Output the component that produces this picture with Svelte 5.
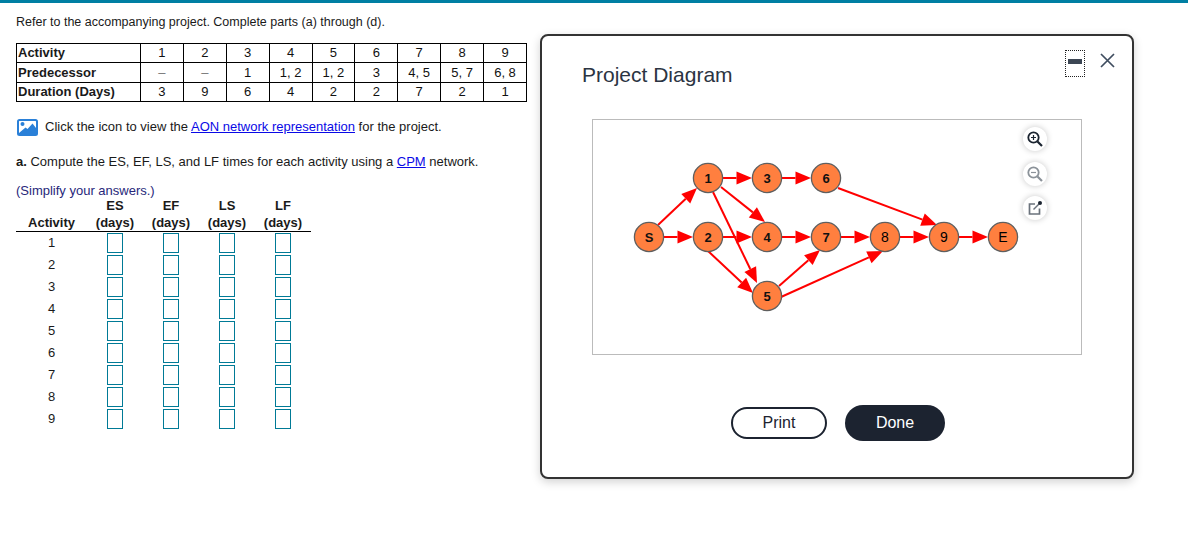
<script>
    const cols = [
        ['1', '–', '3'], ['2', '–', '9'], ['3', '1', '6'], ['4', '1, 2', '4'], ['5', '1, 2', '2'],
        ['6', '3', '2'], ['7', '4, 5', '7'], ['8', '5, 7', '2'], ['9', '6, 8', '1']
    ];
    const rowLabels = ['Activity', 'Predecessor', 'Duration (Days)'];
    const activities = ['1', '2', '3', '4', '5', '6', '7', '8', '9'];
    const heads = ['ES', 'EF', 'LS', 'LF'];

    // the svg viewBox uses page coordinates, so these read straight off the screenshot
    const nodes = [
        ['S', 649, 237], ['1', 708, 178], ['3', 767, 178], ['6', 826, 178], ['2', 708, 237], ['4', 767, 237],
        ['7', 826, 237], ['8', 885, 237], ['9', 944, 237], ['E', 1003, 237], ['5', 767, 296]
    ];
    const edges = [
        [658, 225, 697, 188], [664, 237, 693, 237], [723, 178, 752, 178], [782, 178, 811, 178],
        [721, 187, 765, 222], [713, 192, 757, 283], [723, 237, 752, 237], [708, 251, 753, 293],
        [782, 237, 811, 237], [779, 286, 820, 250], [781, 297, 883, 251], [841, 237, 870, 237],
        [838, 188, 937, 225], [900, 237, 929, 237], [959, 237, 988, 237]
    ];
    const R = 14.6;

    function arrow([x1, y1, tipX, tipY]) {
        const len = Math.hypot(tipX - x1, tipY - y1);
        const ux = (tipX - x1) / len;
        const uy = (tipY - y1) / len;
        const baseX = tipX - ux * 15.5;
        const baseY = tipY - uy * 15.5;
        const head = [
            [tipX, tipY],
            [baseX - uy * 6.5, baseY + ux * 6.5],
            [baseX + uy * 6.5, baseY - ux * 6.5]
        ].map((p) => p.join(',')).join(' ');
        return { x1, y1, x2: baseX, y2: baseY, head };
    }
    const arrows = edges.map(arrow);
</script>

<div class="page">
    <div class="topbar"></div>
    <main class="question">
        <p class="intro">Refer to the accompanying project. Complete parts (a) through (d).</p>

        <table class="data">
            <tbody>
                {#each rowLabels as label, r}
                    <tr>
                        <th>{label}</th>
                        {#each cols as col}
                            <td class:dash={col[r] === '–'}>{col[r]}</td>
                        {/each}
                    </tr>
                {/each}
            </tbody>
        </table>

        <p class="icon-line">
            <svg class="pic" width="21" height="17" viewBox="0 0 21 17">
                <rect x="1" y="1" width="19" height="15" rx="1.5" fill="#fff" stroke="#2a80d8" stroke-width="2" />
                <path d="M2 15 V14 L8.5 8.5 L10.5 10 L15.5 4.5 L19 9 V15 Z" fill="#2a80d8" />
                <circle cx="5.5" cy="5" r="2" fill="#2a80d8" />
            </svg>
            <span>Click the icon to view the <a href="#aon">AON network representation</a> for the project.</span>
        </p>

        <p class="part"><b>a.</b> Compute the ES, EF, LS, and LF times for each activity using a <a href="#cpm">CPM</a> network.</p>

        <p class="simplify">(Simplify your answers.)</p>

        <table class="answers">
            <thead>
                <tr>
                    <th class="act">Activity</th>
                    {#each heads as h}
                        <th>{h}<br />(days)</th>
                    {/each}
                </tr>
            </thead>
            <tbody>
                {#each activities as a}
                    <tr>
                        <td class="num">{a}</td>
                        {#each heads as h}
                            <td><input type="text" aria-label={`${h} activity ${a}`} /></td>
                        {/each}
                    </tr>
                {/each}
            </tbody>
        </table>
    </main>

    <section class="dialog">
        <button class="min" aria-label="Minimize"><span></span></button>
        <button class="close" aria-label="Close">
            <svg width="15" height="15" viewBox="0 0 15 15">
                <path d="M1 1 L14 14 M14 1 L1 14" stroke="#3f4d5f" stroke-width="1.7" fill="none" />
            </svg>
        </button>

        <h2>Project Diagram</h2>

        <div class="frame">
            <svg class="graph" width="488" height="234" viewBox="593 120 488 234">
                {#each arrows as a}
                    <line x1={a.x1} y1={a.y1} x2={a.x2} y2={a.y2} stroke="#ff0000" stroke-width="2" />
                    <polygon points={a.head} fill="#ff0000" />
                {/each}
                {#each nodes as [name, x, y]}
                    <circle cx={x} cy={y} r={R} fill="#ff7f3f" stroke="#5f5f5f" stroke-width="1.3" />
                    <text x={x} y={y + 5} text-anchor="middle" class:thin={name === '8' || name === '9' || name === 'E'}>{name}</text>
                {/each}
            </svg>

            <div class="tools">
                <button aria-label="Zoom in">
                    <svg width="18" height="18" viewBox="0 0 18 18">
                        <circle cx="7.5" cy="7.5" r="5.2" fill="none" stroke="#1b2430" stroke-width="1.8" />
                        <path d="M11.5 11.5 L16 16" stroke="#1b2430" stroke-width="2.2" />
                        <path d="M5 7.5 H10 M7.5 5 V10" stroke="#1b2430" stroke-width="1.2" />
                    </svg>
                </button>
                <button aria-label="Zoom out">
                    <svg width="18" height="18" viewBox="0 0 18 18">
                        <circle cx="7.5" cy="7.5" r="5.2" fill="none" stroke="#8b9299" stroke-width="1.8" />
                        <path d="M11.5 11.5 L16 16" stroke="#8b9299" stroke-width="2.2" />
                        <path d="M5 7.5 H10" stroke="#8b9299" stroke-width="1.2" />
                    </svg>
                </button>
                <button aria-label="Open in new window">
                    <svg width="18" height="18" viewBox="0 0 18 18">
                        <path d="M9 5 H3.5 V15 H13.5 V9.5" fill="none" stroke="#6b737c" stroke-width="1.7" />
                        <path d="M7.5 10.5 L13 5" stroke="#6b737c" stroke-width="1.5" />
                        <circle cx="14" cy="4" r="2" fill="#1b2430" />
                    </svg>
                </button>
            </div>
        </div>

        <div class="actions">
            <button class="print">Print</button>
            <button class="done">Done</button>
        </div>
    </section>
</div>

<style>
    :global(body) {
        margin: 0;
        background: #fff;
        overflow: hidden;
    }

    .page {
        position: relative;
        height: 534px;
        font-family: "Liberation Sans", Arial, sans-serif;
        font-size: 13px;
        color: #1a1a1a;
    }

    .topbar {
        height: 3px;
        background: #007fa3;
    }

    .question {
        padding: 12px 0 0 16px;
        width: 520px;
    }

    p {
        margin: 0;
    }

    a {
        color: #0a0ae6;
        text-decoration: underline;
    }

    .intro {
        font-size: 12.5px;
        line-height: 14px;
    }

    .data {
        margin-top: 14px;
        border-collapse: collapse;
        table-layout: fixed;
        width: 511px;
        color: #111;
    }

    .data th,
    .data td {
        border: 1px solid #000;
        padding: 0;
        height: 18.4px;
        line-height: 14px;
        text-align: center;
        font-weight: 400;
    }

    .data th {
        width: 122px;
        text-align: left;
        font-weight: 700;
        padding-left: 1px;
        color: #1a1a1a;
    }

    .data td.dash {
        color: #777;
    }

    .icon-line {
        display: flex;
        align-items: center;
        gap: 7px;
        margin: 16px 0 0 1px;
        line-height: 18px;
    }

    .part {
        margin-top: 19px;
        line-height: 14px;
    }

    .simplify {
        margin-top: 15px;
        color: #27277a;
        line-height: 14px;
    }

    .answers {
        border-collapse: collapse;
        table-layout: fixed;
        width: 295px;
    }

    .answers th {
        width: 56px;
        padding: 0;
        line-height: 16.5px;
        vertical-align: bottom;
        font-weight: 700;
        border-bottom: 1px solid #000;
    }

    .answers th.act {
        width: 71px;
    }

    .answers td {
        height: 22px;
        padding: 0;
        text-align: center;
    }

    .answers td.num {
        box-sizing: border-box;
        padding-bottom: 2px;
    }

    .answers input {
        display: block;
        box-sizing: border-box;
        width: 16px;
        height: 20px;
        margin: 0 auto;
        padding: 0;
        border: 1px solid #007a96;
        border-radius: 0;
        background: #fff;
    }

    .dialog {
        position: absolute;
        left: 540px;
        top: 34px;
        box-sizing: border-box;
        width: 594px;
        height: 445px;
        padding: 27px 40px 0;
        background: #fff;
        border: 2px solid #333;
        border-radius: 8px;
        box-shadow: 0 3px 10px rgba(0, 0, 0, 0.18);
    }

    .dialog h2 {
        margin: 0;
        font-size: 21px;
        font-weight: 400;
        line-height: 24px;
        color: #2b3442;
    }

    .dialog button {
        font-family: inherit;
        cursor: pointer;
    }

    .min {
        position: absolute;
        left: 523px;
        top: 14px;
        box-sizing: border-box;
        width: 20px;
        height: 27px;
        padding: 0;
        display: flex;
        align-items: center;
        justify-content: center;
        background: none;
        border: 1px dotted #222;
    }

    .min span {
        display: block;
        width: 14px;
        height: 5px;
        background: #3c4654;
        margin-top: -4px;
    }

    .close {
        position: absolute;
        left: 558px;
        top: 17px;
        width: 15px;
        height: 15px;
        padding: 0;
        background: none;
        border: 0;
    }

    .frame {
        position: relative;
        box-sizing: border-box;
        width: 490px;
        height: 236px;
        margin: 32px 0 0 10px;
        border: 1px solid #bbb;
    }

    .graph {
        display: block;
    }

    .graph text {
        font-family: "Liberation Sans", Arial, sans-serif;
        font-size: 13px;
        font-weight: 700;
        fill: #111;
    }

    .graph text.thin {
        font-size: 14px;
        font-weight: 400;
        fill: #000;
    }

    .tools {
        position: absolute;
        top: 7px;
        right: 34px;
        display: flex;
        flex-direction: column;
        gap: 10.5px;
    }

    .tools button {
        display: flex;
        align-items: center;
        justify-content: center;
        width: 24px;
        height: 24px;
        padding: 0;
        border: 0;
        border-radius: 50%;
        background: #fff;
        box-shadow: 0 0 6px rgba(0, 0, 0, 0.22);
    }

    .actions {
        display: flex;
        align-items: center;
        gap: 18px;
        margin: 50px 0 0 149px;
    }

    .actions button {
        font-size: 16px;
        border-radius: 18px;
        color: #1c2330;
    }

    .print {
        box-sizing: border-box;
        width: 96px;
        height: 32px;
        background: #fff;
        border: 2px solid #1c2330;
    }

    .actions .done {
        box-sizing: border-box;
        width: 100px;
        height: 36px;
        background: #1c2330;
        border: 0;
        color: #fff;
    }
</style>
